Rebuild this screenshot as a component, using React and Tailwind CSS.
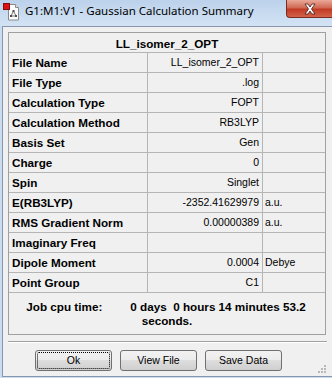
export default function App() {
  const rows = [
    ["File Name", "LL_isomer_2_OPT", ""],
    ["File Type", ".log", ""],
    ["Calculation Type", "FOPT", ""],
    ["Calculation Method", "RB3LYP", ""],
    ["Basis Set", "Gen", ""],
    ["Charge", "0", ""],
    ["Spin", "Singlet", ""],
    ["E(RB3LYP)", "-2352.41629979", "a.u."],
    ["RMS Gradient Norm", "0.00000389", "a.u."],
    ["Imaginary Freq", "", ""],
    ["Dipole Moment", "0.0004", "Debye"],
    ["Point Group", "C1", ""],
  ];
  const btn =
    "relative w-[77px] h-[21px] rounded-[3px] border border-[#707070] bg-[linear-gradient(#f2f2f2,#ebebeb_50%,#dddddd_50%,#cfcfcf)] flex items-center justify-center text-[10.5px] text-black";
  return (
    <div
      className="w-[332px] h-[378px] overflow-hidden bg-[#cadcf0] flex flex-col"
      style={{ fontFamily: '"Liberation Sans", Arial, sans-serif' }}
    >
      {/* title bar */}
      <div className="h-[26px] flex items-start bg-[linear-gradient(#bcd2eb,#d3e3f4)] shrink-0">
        <svg width="18" height="18" viewBox="0 0 18 18" className="mt-[3px] ml-[3px]">
          <path d="M5.5 1.5h7l3 3v12.5h-10z" fill="#fff" stroke="#8a8a8a" />
          <path d="M12.5 1.5v3h3" fill="#e8e8e8" stroke="#8a8a8a" />
          <rect x="0.5" y="0.5" width="6" height="6" fill="#e01010" stroke="#801010" />
          <line x1="10.5" y1="8" x2="8" y2="13" stroke="#707070" />
          <line x1="10.5" y1="8" x2="13" y2="13" stroke="#707070" />
          <line x1="8" y1="13" x2="13" y2="13" stroke="#707070" />
          <rect x="9.5" y="7" width="2" height="2" fill="#505050" />
          <rect x="7" y="12" width="2" height="2" fill="#505050" />
          <rect x="12" y="12" width="2" height="2" fill="#505050" />
        </svg>
        <div
          className="ml-[4px] mt-[3px] text-[11.5px] leading-[16px] text-black whitespace-nowrap"
          style={{ fontFamily: '"Noto Sans", "Open Sans", sans-serif' }}
        >
          G1:M1:V1 - Gaussian Calculation Summary
        </div>
        <div className="ml-auto w-[46px] h-[18px] rounded-bl-[4px] border border-t-0 border-r-0 border-[#7a2a1e] bg-[linear-gradient(#eaa899,#d06a55_45%,#c23a24_55%,#d2634b)] flex items-center justify-center">
          <svg width="16" height="12" viewBox="0 0 16 12">
            <path
              d="M3 1h3l2 3 2-3h3l-3.5 5 3.5 5h-3l-2-3-2 3h-3l3.5-5z"
              fill="#fff"
              stroke="#4a1a14"
              strokeWidth="0.8"
              strokeLinejoin="round"
            />
          </svg>
        </div>
      </div>

      {/* client area */}
      <div className="relative flex-1 ml-[2px] mb-[1px] border-l border-t border-b border-[#8596ae] bg-[#f0f0f0] flex flex-col">
        <div className="ml-[5px] mt-[5px] w-[318px] border border-[#a0a0a0] flex flex-col">
          <div className="h-[20px] border-b border-[#b5b5b5] flex items-center justify-center pt-[2px] font-bold text-[11.7px] text-black">
            LL_isomer_2_OPT
          </div>
          {rows.map(([a, b, c]) => (
            <div key={a} className="h-[20px] border-b border-[#b5b5b5] flex">
              <div className="w-[139px] border-r border-[#b5b5b5] pl-[3px] pt-[1px] flex items-center font-bold text-[11.7px] text-black whitespace-nowrap">
                {a}
              </div>
              <div className="w-[115px] border-r border-[#b5b5b5] pr-[3px] pt-[1px] flex items-center justify-end text-[10.5px] text-black whitespace-nowrap">
                {b}
              </div>
              <div className="flex-1 pl-[2px] pt-[1px] flex items-center text-[10.5px] text-black whitespace-nowrap">
                {c}
              </div>
            </div>
          ))}
          <div className="h-[41px] pt-[7px] flex flex-col items-center font-bold text-[11.7px] leading-[14px] text-black">
            <div className="flex whitespace-pre -ml-[2px]">
              <span>Job cpu time:</span>
              <span className="ml-[28px]">0 days  0 hours 14 minutes 53.2</span>
            </div>
            <div>seconds.</div>
          </div>
        </div>

        <div className="ml-[5px] mt-[6px] w-[319px] h-[2px] border-t border-b border-t-[#a0a0a0] border-b-white" />

        <div className="ml-[32px] mt-[7px] flex gap-[8px]">
          <div className={btn + " border-[#3c3c3c]"}>
            <div className="absolute inset-[1px] border border-dotted border-black rounded-[2px]" />
            Ok
          </div>
          <div className={btn}>View File</div>
          <div className={btn}>Save Data</div>
        </div>

        {/* size grip */}
        <div className="absolute right-[6px] bottom-[3px] grid grid-cols-3 gap-[1px]">
          <span />
          <span />
          <span className="w-[2px] h-[2px] bg-[#b8b8b8]" />
          <span />
          <span className="w-[2px] h-[2px] bg-[#b8b8b8]" />
          <span className="w-[2px] h-[2px] bg-[#b8b8b8]" />
          <span className="w-[2px] h-[2px] bg-[#b8b8b8]" />
          <span className="w-[2px] h-[2px] bg-[#b8b8b8]" />
          <span className="w-[2px] h-[2px] bg-[#b8b8b8]" />
        </div>
      </div>
    </div>
  );
}
